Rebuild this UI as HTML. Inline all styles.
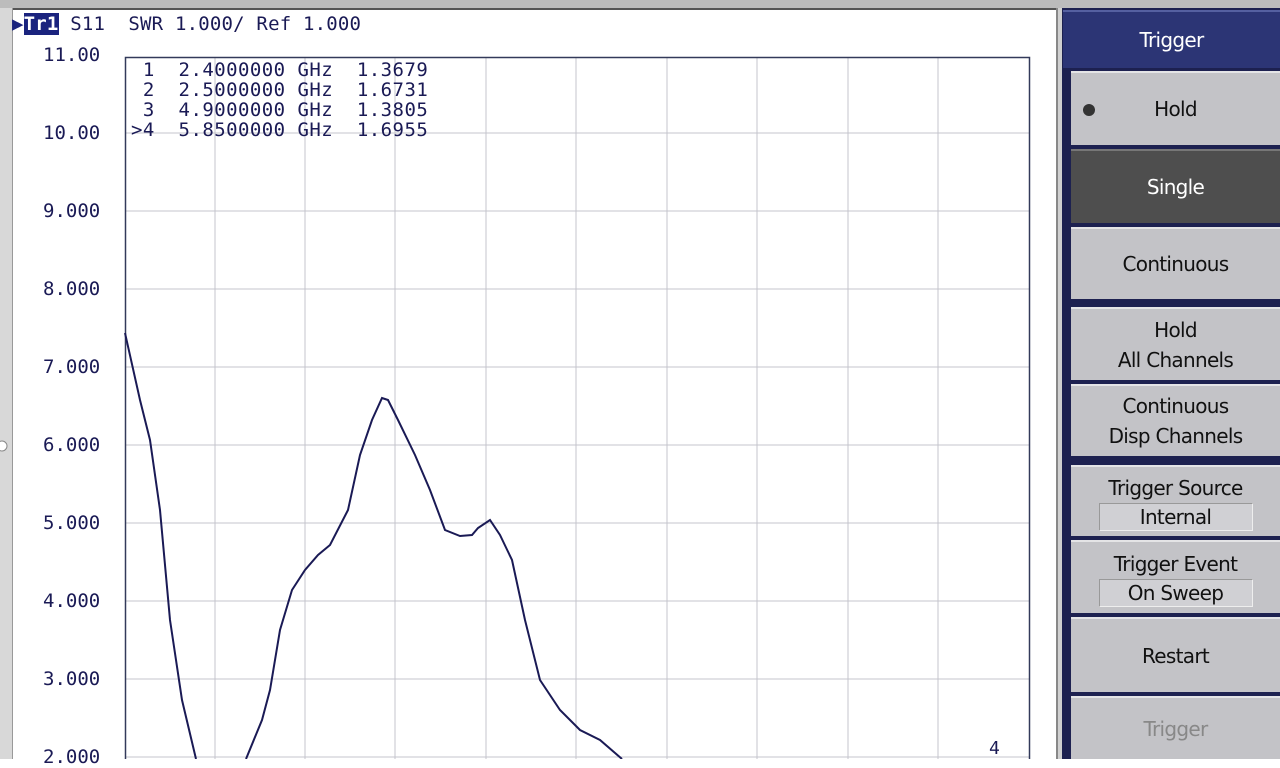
<!DOCTYPE html>
<html><head><style>
body{margin:0;width:1280px;height:759px;overflow:hidden;background:#fff;font-family:"DejaVu Sans Mono","Liberation Mono",monospace;position:relative}
.btn{position:absolute;left:1071px;width:209px;background:#c3c3c7;border-top:2px solid #e4e4e6;box-sizing:border-box;font-family:"DejaVu Sans","Liberation Sans",sans-serif;font-size:20px;color:#111;text-align:center;display:flex;flex-direction:column;justify-content:center;align-items:center;line-height:30px;letter-spacing:-0.7px}
.box{width:152px;height:26px;background:#d0d0d4;border:1px solid #999;border-right-color:#eee;border-bottom-color:#eee;line-height:26px}
.lbl{position:absolute;left:43px;font-size:19px;color:#1a1a55}
</style></head><body>
<div style="position:absolute;left:0;top:0;width:1280px;height:8px;background:#bcbcbc;border-bottom:2px solid #555"></div>
<div style="position:absolute;left:0;top:8px;width:12px;height:751px;background:#d8d8d8;border-right:1px solid #999"></div>
<div style="position:absolute;left:1056px;top:8px;width:6px;height:751px;background:#d0d0d0;border-left:2px solid #888"></div>
<div style="position:absolute;left:1062px;top:8px;width:218px;height:751px;background:#1d2150"></div>
<div style="position:absolute;left:12px;top:13px;font-size:19px;color:#1a1a55;white-space:pre;letter-spacing:0.2px"><span style="color:#1a237e">&#9654;</span><span style="background:#1a237e;color:#fff;font-weight:bold">Tr1</span> S11  SWR 1.000/ Ref 1.000</div>
<div class="lbl" style="top:44px">11.00</div>
<div class="lbl" style="top:122px">10.00</div>
<div class="lbl" style="top:200px">9.000</div>
<div class="lbl" style="top:278px">8.000</div>
<div class="lbl" style="top:356px">7.000</div>
<div class="lbl" style="top:434px">6.000</div>
<div class="lbl" style="top:512px">5.000</div>
<div class="lbl" style="top:590px">4.000</div>
<div class="lbl" style="top:668px">3.000</div>
<div class="lbl" style="top:746px">2.000</div>
<svg style="position:absolute;left:0;top:0" width="1056" height="759">
<g stroke="#c4c4cc" stroke-width="1">
<line x1="125" y1="133" x2="1029" y2="133"/><line x1="125" y1="211" x2="1029" y2="211"/><line x1="125" y1="289" x2="1029" y2="289"/><line x1="125" y1="367" x2="1029" y2="367"/><line x1="125" y1="445" x2="1029" y2="445"/><line x1="125" y1="523" x2="1029" y2="523"/><line x1="125" y1="601" x2="1029" y2="601"/><line x1="125" y1="679" x2="1029" y2="679"/><line x1="125" y1="757" x2="1029" y2="757"/>
<line x1="215" y1="57" x2="215" y2="759"/><line x1="305" y1="57" x2="305" y2="759"/><line x1="395" y1="57" x2="395" y2="759"/><line x1="486" y1="57" x2="486" y2="759"/><line x1="576" y1="57" x2="576" y2="759"/><line x1="667" y1="57" x2="667" y2="759"/><line x1="757" y1="57" x2="757" y2="759"/><line x1="848" y1="57" x2="848" y2="759"/><line x1="938" y1="57" x2="938" y2="759"/>
</g>
<path d="M125.5 759V57.5H1029.5V759" fill="none" stroke="#333a5a" stroke-width="1.5"/>
<path d="M125 333L140 400L150 440L160 510L170 620L182 700L196 759M246 759L262 720L270 690L280 630L292 590L305 570L318 555L330 545L348 510L360 455L372 420L382 398L388 400L398 420L415 455L430 490L445 530L460 536L472 535L478 528L490 520L500 535L512 560L525 620L540 680L560 710L580 730L600 740L622 759" fill="none" stroke="#1a1a55" stroke-width="2"/>
<circle cx="2" cy="446" r="5" fill="#fff" stroke="#888"/>
</svg>
<div style="position:absolute;left:131px;top:60px;font-size:19px;line-height:20px;color:#1a1a55;white-space:pre;letter-spacing:0.45px"> 1  2.4000000 GHz  1.3679
 2  2.5000000 GHz  1.6731
 3  4.9000000 GHz  1.3805
&gt;4  5.8500000 GHz  1.6955</div>
<div style="position:absolute;left:989px;top:738px;font-size:18px;color:#1a1a55">4</div>
<div class="btn" style="top:10px;height:58px;background:#2c3575;color:#fff;border-top-color:#5560a0;left:1063px;width:217px">Trigger</div>
<div class="btn" style="top:71px;height:74px"><span style="position:absolute;left:12px;top:31px;width:12px;height:12px;border-radius:6px;background:#333"></span>Hold</div>
<div class="btn" style="top:149px;height:74px;background:#4e4e4e;color:#fff;border-top-color:#777">Single</div>
<div class="btn" style="top:227px;height:72px">Continuous</div>
<div class="btn" style="top:307px;height:73px">Hold<br>All Channels</div>
<div class="btn" style="top:384px;height:72px">Continuous<br>Disp Channels</div>
<div class="btn" style="top:465px;height:71px">Trigger Source<div class="box">Internal</div></div>
<div class="btn" style="top:540px;height:73px">Trigger Event<div class="box">On Sweep</div></div>
<div class="btn" style="top:617px;height:75px">Restart</div>
<div class="btn" style="top:696px;height:63px;color:#888">Trigger</div>
</body></html>
